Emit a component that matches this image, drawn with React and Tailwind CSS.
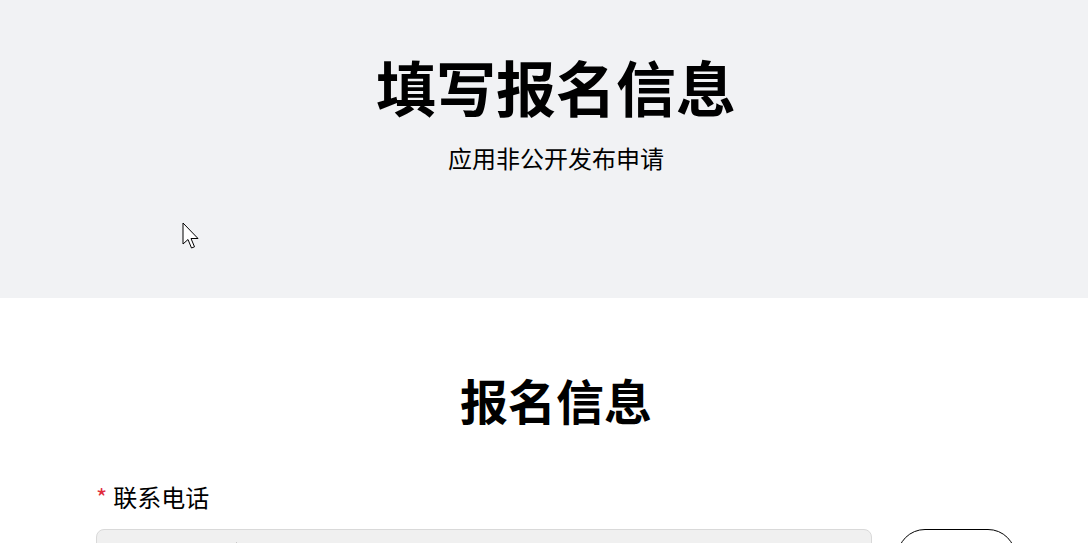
import React from "react";

const font = { fontFamily: '"Noto Sans CJK SC", "Noto Sans", sans-serif' };

export default function App() {
  return (
    <div className="relative w-full min-h-screen bg-white text-black" style={font}>
      <section className="h-[298px] bg-[#f1f2f4] flex flex-col items-center pt-[56px] pl-[96px] pr-[72px]">
        <h1 className="text-[60px] leading-[60px] font-bold">填写报名信息</h1>
        <p className="mt-[30px] text-[24px] leading-[24px]">应用非公开发布申请</p>
      </section>
      <section className="pt-[77px] pl-[96px] pr-[72px]">
        <h2 className="text-[48px] leading-[48px] font-bold text-center">报名信息</h2>
        <div className="mt-[62px] flex items-center text-[24px] leading-[24px]">
          <span className="text-[#e02b3c] mr-[6px]">*</span>
          <span>联系电话</span>
        </div>
        <div className="mt-[20px] flex items-start gap-[25px]">
          <div className="flex-1 h-[56px] rounded-[8px] border border-[#d9d9d9] bg-[#f0f0f0] flex items-center">
            <div className="w-[139px] h-full" />
            <div className="w-px h-[24px] bg-[#c8c8c8] mt-[12px] self-start" />
          </div>
          <button className="w-[119px] h-[56px] rounded-full border border-black bg-white" />
        </div>
      </section>
      <svg className="absolute left-[182px] top-[222px]" width="19" height="28" viewBox="0 0 19 28">
        <path d="M1 1 L1 22 L6 17.5 L9.5 26 L12.5 24.8 L9 16.5 L16 16.5 Z" fill="white" stroke="black" strokeWidth="1" strokeLinejoin="round" />
      </svg>
    </div>
  );
}
